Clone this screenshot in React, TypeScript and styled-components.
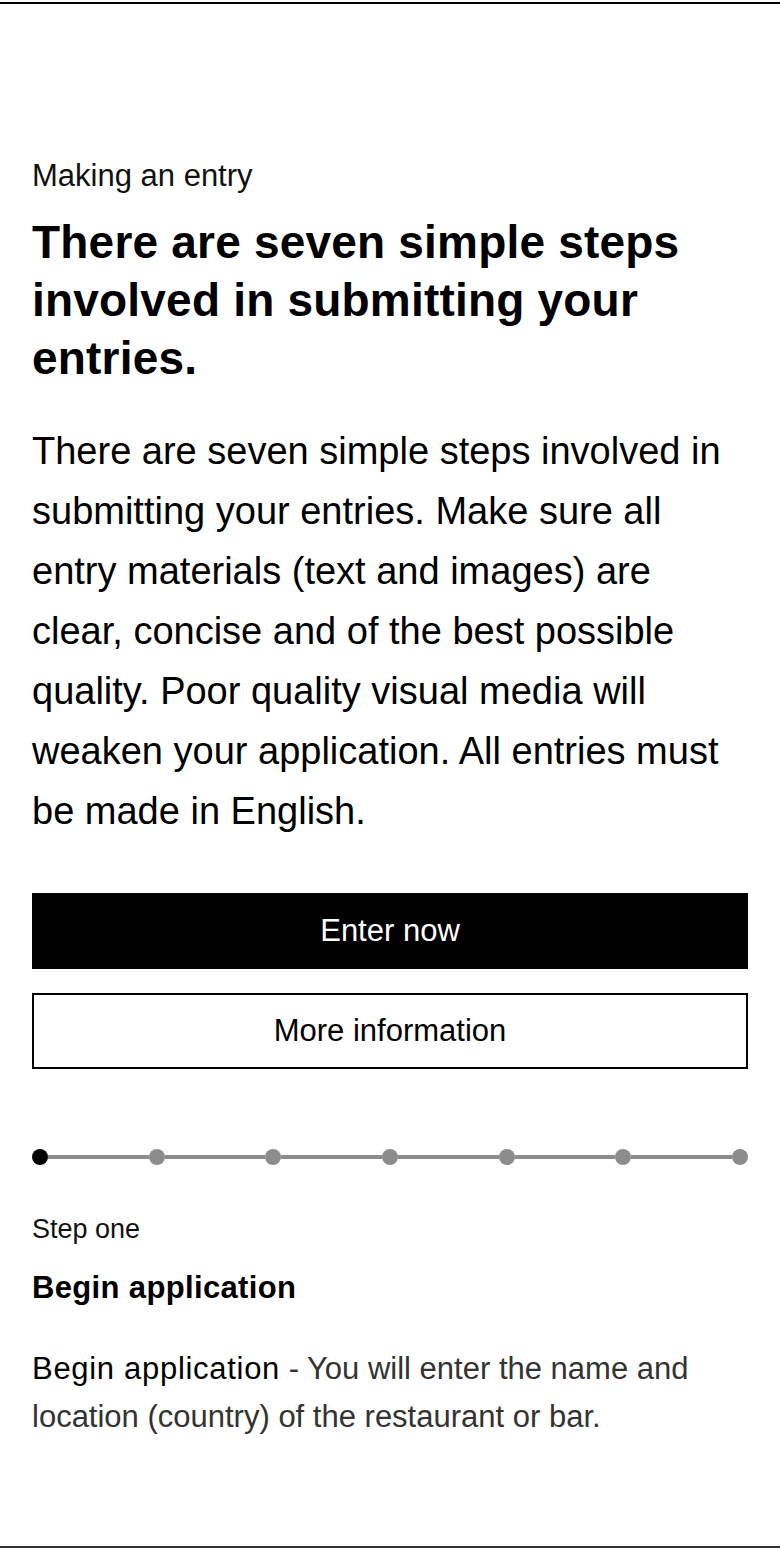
import * as React from 'react';
import styled, { createGlobalStyle } from 'styled-components';

const GlobalStyle = createGlobalStyle`
  html, body {
    margin: 0;
    padding: 0;
    background: #fff;
  }

  body {
    font-family: 'Liberation Sans', Arial, Helvetica, sans-serif;
    color: #000;
    -webkit-font-smoothing: antialiased;
  }
`;

const Frame = styled.main`
  box-sizing: border-box;
  margin-top: 2px;
  height: 1546px;
  border-top: 2px solid #000;
  border-bottom: 2px solid #333;
  padding: 154px 32px 0;
  display: flex;
  flex-direction: column;
`;

const Eyebrow = styled.p`
  margin: 0;
  font-size: 31px;
  line-height: 36px;
  color: #111;
`;

const Headline = styled.h1`
  margin: 19px 0 0;
  font-size: 46px;
  line-height: 58px;
  font-weight: 700;
  letter-spacing: 0.2px;
`;

const Lede = styled.p`
  margin: 34px 0 0;
  font-size: 38px;
  line-height: 60px;
  font-weight: 400;
`;

const Actions = styled.div`
  display: flex;
  flex-direction: column;
  gap: 24px;
  margin-top: 52px;
`;

const Button = styled.a<{ $primary?: boolean }>`
  box-sizing: border-box;
  display: flex;
  align-items: center;
  justify-content: center;
  height: 76px;
  font-size: 31px;
  text-decoration: none;
  cursor: pointer;
  background: ${(p) => (p.$primary ? '#000' : '#fff')};
  color: ${(p) => (p.$primary ? '#fff' : '#000')};
  border: 2px solid #000;
`;

const Stepper = styled.ol`
  display: flex;
  align-items: center;
  list-style: none;
  margin: 80px 0 0;
  padding: 0;
`;

const Dot = styled.li<{ $active?: boolean }>`
  flex: none;
  width: 16px;
  height: 16px;
  border-radius: 50%;
  background: ${(p) => (p.$active ? '#000' : '#8c8c8c')};
`;

const Track = styled.li`
  flex: 1;
  height: 4px;
  background: #8c8c8c;
`;

const StepLabel = styled.p`
  margin: 48px 0 0;
  font-size: 27px;
  line-height: 32px;
  color: #111;
`;

const StepTitle = styled.h2`
  margin: 25px 0 0;
  font-size: 31px;
  line-height: 36px;
  font-weight: 700;
  letter-spacing: 0.35px;
`;

const StepCopy = styled.p`
  margin: 39px 0 0;
  font-size: 31px;
  line-height: 48px;
  color: #333;
`;

const StepName = styled.span`
  color: #000;
  letter-spacing: 0.7px;
`;

const STEP_COUNT = 7;

const App = () => {
  const current = 0;

  return (
    <>
      <GlobalStyle />
      <Frame>
        <Eyebrow>Making an entry</Eyebrow>
        <Headline>There are seven simple steps involved in submitting your entries.</Headline>
        <Lede>
          There are seven simple steps involved in submitting your entries. Make sure all entry
          materials (text and images) are clear, concise and of the best possible quality. Poor
          quality visual media will weaken your application. All entries must be made in English.
        </Lede>

        <Actions>
          <Button $primary>Enter now</Button>
          <Button>More information</Button>
        </Actions>

        <Stepper>
          {Array.from({ length: STEP_COUNT }).map((_, i) => (
            <React.Fragment key={i}>
              {i > 0 && <Track />}
              <Dot $active={i === current} />
            </React.Fragment>
          ))}
        </Stepper>

        <StepLabel>Step one</StepLabel>
        <StepTitle>Begin application</StepTitle>
        <StepCopy>
          <StepName>Begin application</StepName> - You will enter the name and location (country)
          of the restaurant or bar.
        </StepCopy>
      </Frame>
    </>
  );
};

export default App;
